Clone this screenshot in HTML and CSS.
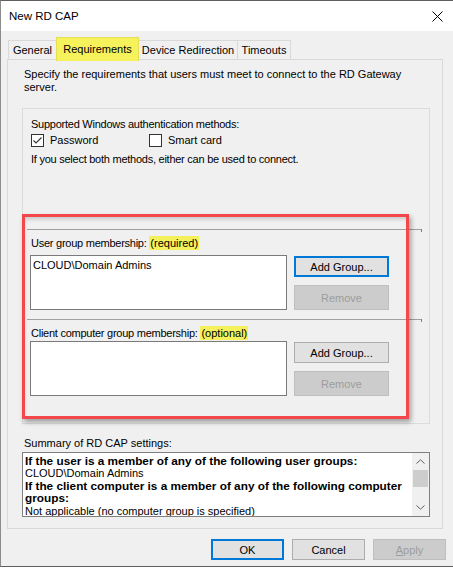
FILE: index.html
```html
<!DOCTYPE html>
<html>
<head>
<meta charset="utf-8">
<title>New RD CAP</title>
<link rel="stylesheet" href="styles.css">
</head>
<body>
<div class="window">
  <div class="titlebar">
    <span class="title">New RD CAP</span>
    <svg class="close" width="11" height="11" viewBox="0 0 11 11"><path d="M0.5 0.5 L10.5 10.5 M10.5 0.5 L0.5 10.5" stroke="#000" stroke-width="1" fill="none"/></svg>
  </div>
  <div class="tabs">
    <div class="tab t-general">General</div>
    <div class="tab tab-active t-req">Requirements</div>
    <div class="tab t-dev">Device Redirection</div>
    <div class="tab t-time">Timeouts</div>
  </div>
  <div class="panel">
    <p class="intro">Specify the requirements that users must meet to connect to the RD Gateway server.</p>
    <div class="group">
      <div class="label l-auth">Supported Windows authentication methods:</div>
      <div class="checks">
        <div class="check c-pass"><span class="box"><svg width="11" height="11" viewBox="0 0 11 11"><path d="M1.5 5.5 L4 8 L9.5 2.5" stroke="#333" stroke-width="1.1" fill="none"/></svg></span>Password</div>
        <div class="check"><span class="box"></span>Smart card</div>
      </div>
      <div class="label l-note">If you select both methods, either can be used to connect.</div>
      <div class="sep s1"></div>
      <div class="label l-user">User group membership: <span class="hl">(required)</span></div>
      <div class="member-row r1">
        <div class="listbox"><div class="item">CLOUD\Domain Admins</div></div>
        <div class="btn-col">
          <div class="btn btn-default">Add Group...</div>
          <div class="btn btn-remove disabled">Remove</div>
        </div>
      </div>
      <div class="sep s2"></div>
      <div class="label l-client">Client computer group membership: <span class="hl">(optional)</span></div>
      <div class="member-row r2">
        <div class="listbox"></div>
        <div class="btn-col">
          <div class="btn">Add Group...</div>
          <div class="btn btn-remove disabled">Remove</div>
        </div>
      </div>
      <div class="annotation"></div>
    </div>
    <div class="label l-summary">Summary of RD CAP settings:</div>
    <div class="summary">
      <div class="summary-text">
        <b>If the user is a member of any of the following user groups:</b><br>
        <span>CLOUD\Domain Admins</span><br>
        <b>If the client computer is a member of any of the following computer groups:</b><br>
        <span>Not applicable (no computer group is specified)</span>
      </div>
      <div class="scrollbar">
        <div class="arrow"><svg width="9" height="5" viewBox="0 0 9 5"><polyline points="0.5,4.5 4.5,0.8 8.5,4.5" stroke="#606060" stroke-width="1" fill="none"/></svg></div>
        <div class="thumb"></div>
        <div class="track"></div>
        <div class="arrow"><svg width="9" height="5" viewBox="0 0 9 5"><polyline points="0.5,0.5 4.5,4.2 8.5,0.5" stroke="#606060" stroke-width="1" fill="none"/></svg></div>
      </div>
    </div>
  </div>
  <div class="footer">
    <div class="btn fbtn btn-default">OK</div>
    <div class="btn fbtn">Cancel</div>
    <div class="btn fbtn disabled"><span><u>A</u>pply</span></div>
  </div>
</div>
</body>
</html>
```

FILE: styles.css
```css
* { box-sizing: border-box; }
body {
  margin: 0;
  background: #ffffff;
  font-family: "Liberation Sans", Arial, sans-serif;
  font-size: 11px;
  color: #000;
}
.window {
  width: 453px;
  height: 567px;
  background: #f0f0f0;
  border-top: 1px solid #5f5f5f;
  border-left: 1px solid #8c8c8c;
  border-bottom: 1px solid #5f5f5f;
  display: flex;
  flex-direction: column;
}
.titlebar {
  height: 30px;
  flex: none;
  background: #ffffff;
  display: flex;
  align-items: center;
  justify-content: space-between;
  padding: 0 10px 0 8px;
}
.title { font-size: 11.5px; }
.close { display: block; }

.tabs {
  height: 28px;
  flex: none;
  display: flex;
  align-items: flex-end;
  padding-left: 7px;
  position: relative;
  z-index: 2;
}
.tab {
  height: 19px;
  border: 1px solid #d9d9d9;
  border-bottom: none;
  margin-right: -1px;
  display: flex;
  align-items: center;
  justify-content: center;
  background: #f0f0f0;
}
.t-general { width: 49px; }
.t-req { width: 83px; }
.t-dev { width: 100px; }
.t-time { width: 54px; }
.tab-active {
  height: 24px;
  margin-bottom: -2px;
  padding-bottom: 2px;
  background: #f6f25c;
  border-color: #e4df55;
  position: relative;
  z-index: 3;
}

.panel {
  flex: none;
  margin-left: 6px;
  width: 436px;
  height: 470px;
  border: 1px solid #d9d9d9;
  background: #f0f0f0;
  padding-top: 8px;
}
.intro {
  margin: 0 0 0 16px;
  width: 395px;
  line-height: 13px;
}
.label { line-height: 14px; white-space: nowrap; }
.group .label { letter-spacing: -0.25px; }

.group {
  margin: 14px 0 0 14px;
  width: 408px;
  height: 316px;
  border: 1px solid #dcdcdc;
  padding-top: 8px;
  position: relative;
}
.l-auth { margin-left: 8px; }
.checks {
  display: flex;
  align-items: center;
  height: 14px;
  margin: 2px 0 0 8px;
}
.check { display: flex; align-items: center; gap: 6px; }
.c-pass { width: 118px; }
.box {
  width: 13px;
  height: 13px;
  border: 1px solid #333;
  background: #fff;
  display: block;
}
.box svg { display: block; }
.l-note { margin: 5px 0 0 8px; }

.sep {
  height: 1px;
  width: 395px;
  margin-left: 4px;
  background: #a0a0a0;
  position: relative;
}
.sep::after {
  content: "";
  position: absolute;
  right: 0;
  top: 0;
  width: 1px;
  height: 3px;
  background: #7c7c7c;
}
.s1 { margin-top: 63px; }
.s2 { margin-top: 9px; }
.l-user { margin: 6px 0 0 8px; }
.l-client { margin: 6px 0 0 8px; }
.hl {
  background: #f5f15a;
  padding: 1px 1px;
  letter-spacing: 0;
}

.member-row {
  display: flex;
  gap: 7px;
  margin-left: 7px;
}
.r1 { margin-top: 5px; }
.r2 { margin-top: 1px; }
.listbox {
  width: 257px;
  height: 55px;
  border: 1px solid #7a7a7a;
  background: #ffffff;
  padding: 2px 2px;
}
.item { line-height: 14px; }
.btn-col {
  display: flex;
  flex-direction: column;
  gap: 8px;
  padding-top: 1px;
}
.btn {
  width: 95px;
  height: 21px;
  border: 1px solid #adadad;
  background: #e1e1e1;
  display: flex;
  align-items: center;
  justify-content: center;
}
.btn-remove { height: 25px; }
.btn-default { border: 2px solid #0078d7; }
.disabled {
  background: #cccccc;
  border-color: #bfbfbf;
  color: #9d9d9d;
}

.annotation {
  position: absolute;
  left: -1px;
  top: 105px;
  width: 387px;
  height: 205px;
  border: 3px solid #f4474c;
  box-shadow: 2px 3px 5px rgba(0, 0, 0, 0.35), inset 1px 4px 4px -2px rgba(0, 0, 0, 0.18);
  pointer-events: none;
}

.l-summary { margin: 12px 0 0 16px; }
.summary {
  margin: 2px 0 0 14px;
  width: 408px;
  height: 65px;
  border: 1px solid #7f7f7f;
  background: #ffffff;
  display: flex;
}
.summary-text {
  flex: 1;
  padding: 2px 0 0 2px;
  line-height: 12.4px;
  overflow: hidden;
  font-size: 11px;
}
.summary-text b { font-size: 11.8px; }
.scrollbar {
  width: 17px;
  flex: none;
  background: #f0f0f0;
  display: flex;
  flex-direction: column;
  align-items: center;
}
.arrow {
  height: 17px;
  width: 17px;
  display: flex;
  align-items: center;
  justify-content: center;
}
.arrow svg { display: block; }
.thumb {
  width: 15px;
  height: 17px;
  background: #cdcdcd;
}
.track { flex: 1; }

.footer {
  flex: 1;
  display: flex;
  justify-content: flex-end;
  gap: 8px;
  padding: 10px 7px 0 0;
}
.fbtn { width: 73px; height: 21px; }
```
